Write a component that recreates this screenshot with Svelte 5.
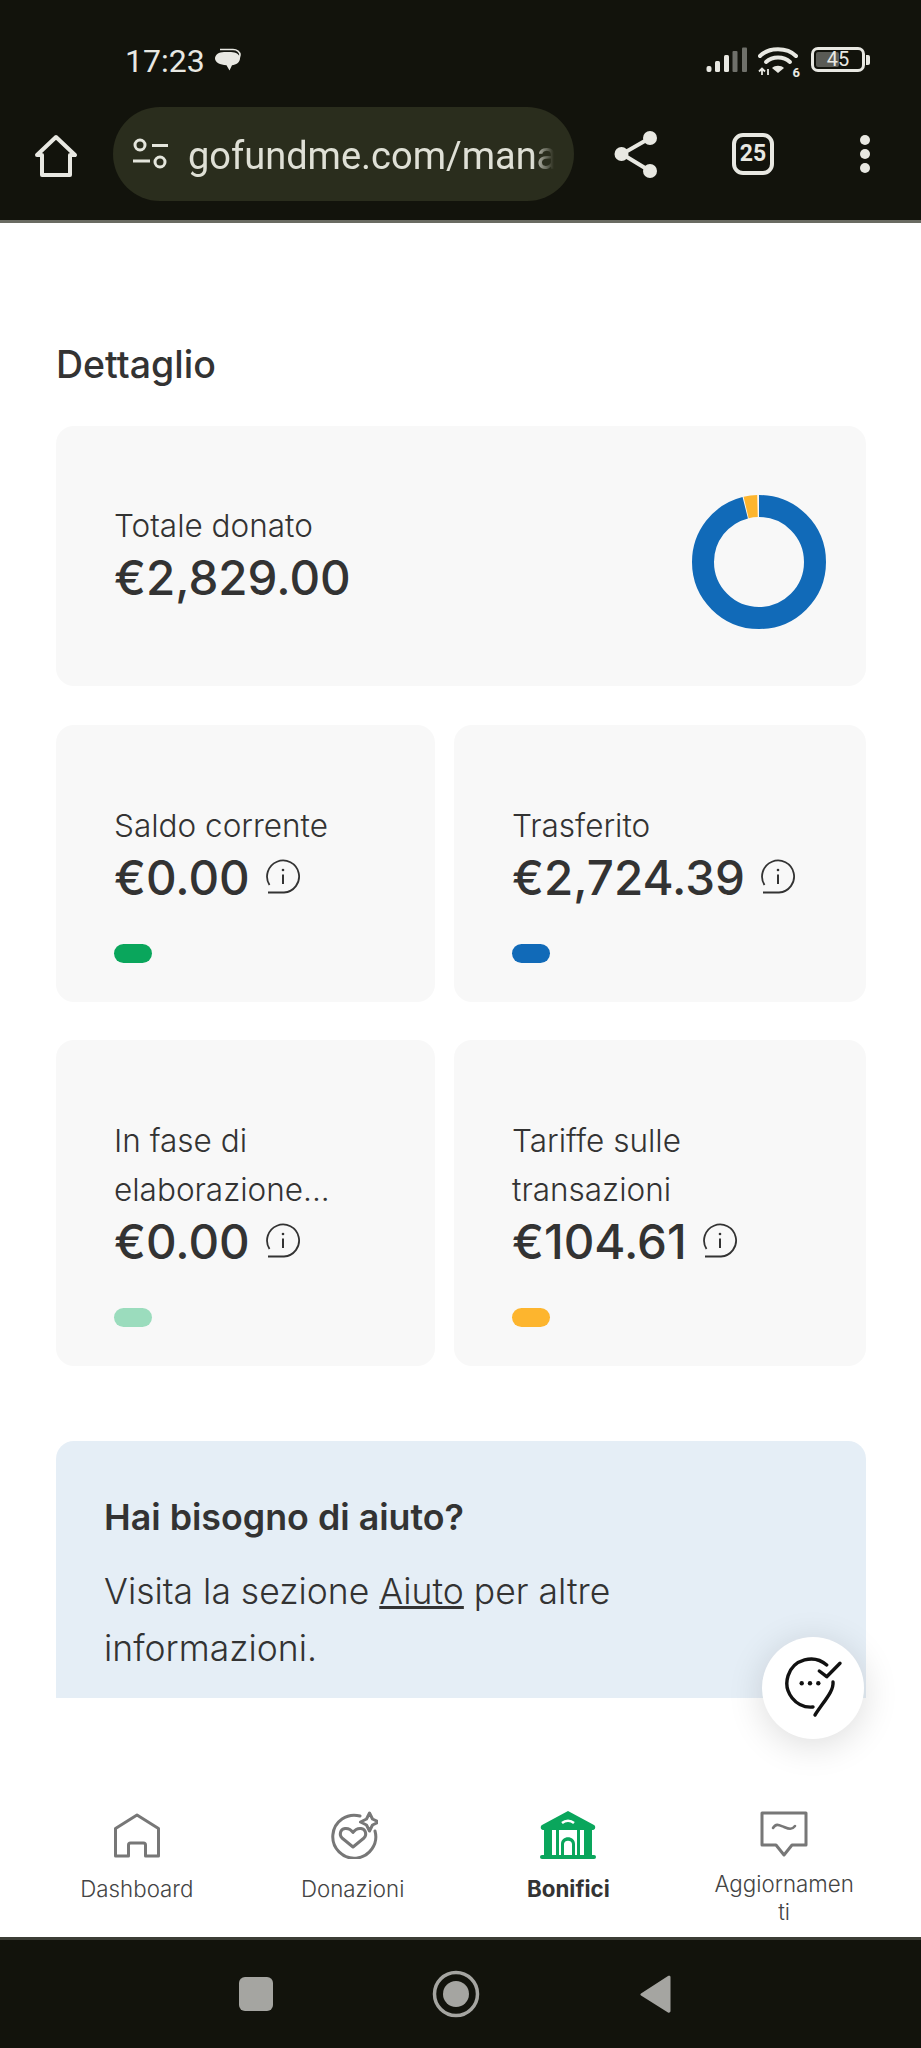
<script>
  const total = 2829;
  const fees = 104.61;

  const radius = 56;
  const circ = 2 * Math.PI * radius;
  const feeShare = fees / total;

  const cards = [
    { label: 'Saldo corrente', amount: '€0.00', color: '#0aa65c' },
    { label: 'Trasferito', amount: '€2,724.39', color: '#116ab8' },
    { label: 'In fase di elaborazione...', amount: '€0.00', color: '#9bdcbd' },
    { label: 'Tariffe sulle transazioni', amount: '€104.61', color: '#fdb52e' }
  ];
</script>

<div class="phone">
  <header class="topbar">
    <div class="status">
      <span class="time">17:23</span>
      <svg class="bubble" width="27" height="26" viewBox="0 0 27 26">
        <path d="M6 1.500h13c4 0 7 2.400 7 5.500 0 2-1 3.600-2.600 4.800" fill="none" stroke="#e8e8e2" stroke-width="1.600" />
        <path d="M10 4h7c5 0 9 2.800 9 6.500S22 17 18 17.200l-2.500 5.300-3-5.300C6 17 1 14.200 1 10.500S5 4 10 4z" fill="#e8e8e2" />
      </svg>
      <div class="status-right">
        <svg width="42" height="26" viewBox="0 0 42 26">
          <rect x="0.500" y="19" width="5" height="6" rx="2" fill="#e8e8e2" />
          <rect x="9" y="14" width="5" height="11" rx="1.500" fill="#e8e8e2" />
          <rect x="18" y="8" width="5" height="17" rx="1.500" fill="#e8e8e2" />
          <rect x="26.500" y="4" width="5" height="21" rx="1" fill="#6f706a" />
          <rect x="36" y="0.500" width="5" height="24.500" rx="1" fill="#6f706a" />
        </svg>
        <div class="wifi">
          <svg width="40" height="30" viewBox="0 0 40 30">
            <path d="M2 10C11 1 29 1 38 10" fill="none" stroke="#e8e8e2" stroke-width="4" stroke-linecap="round" />
            <path d="M8 16c6.500-6 17.500-6 24 0" fill="none" stroke="#e8e8e2" stroke-width="4" stroke-linecap="round" />
            <path d="M14 22c3-3 9-3 12 0L20 27z" fill="#e8e8e2" />
            <path d="M4 29V23M1 25.500 4 22.500 7 25.500M10 23v6" fill="none" stroke="#e8e8e2" stroke-width="1.800" />
          </svg>
          <span class="wifi-gen">6</span>
        </div>
        <div class="battery">
          <div class="battery-body">
            <span class="battery-level"></span>
            <span class="battery-num">45</span>
          </div>
          <span class="battery-nub"></span>
        </div>
      </div>
    </div>

    <div class="toolbar">
      <svg class="tool-home" width="44" height="44" viewBox="0 0 44 44">
        <path d="M3 21 22 3l19 18h-5v20H8V21z" fill="none" stroke="#e8e8e2" stroke-width="4" stroke-linejoin="round" />
      </svg>
      <div class="urlbar">
        <svg width="37" height="34" viewBox="0 0 37 34">
          <circle cx="8" cy="8" r="5" fill="none" stroke="#e4e5dc" stroke-width="3" />
          <path d="M20 8.500h16M1 24h17" stroke="#e4e5dc" stroke-width="3" />
          <circle cx="28" cy="25" r="5" fill="none" stroke="#e4e5dc" stroke-width="3" />
        </svg>
        <span class="url">gofundme.com/manage</span>
      </div>
      <svg class="tool-share" width="44" height="48" viewBox="0 0 44 48">
        <path d="M36 8 8 24l28 17" fill="none" stroke="#e8e8e2" stroke-width="4" />
        <circle cx="36" cy="8" r="7" fill="#e8e8e2" />
        <circle cx="7.500" cy="24" r="7" fill="#e8e8e2" />
        <circle cx="36" cy="41" r="7" fill="#e8e8e2" />
      </svg>
      <div class="tabs">25</div>
      <div class="menu"><span></span><span></span><span></span></div>
    </div>
  </header>

  <main class="content">
    <h2>Dettaglio</h2>

    <section class="card total">
      <div>
        <div class="label">Totale donato</div>
        <div class="amount">€2,829.00</div>
      </div>
      <svg class="donut" width="134" height="134" viewBox="0 0 134 134">
        <circle
          cx="67" cy="67" r={radius} fill="none" stroke="#116ab8" stroke-width="22"
          stroke-dasharray="{(1 - feeShare) * circ - 1.5} {feeShare * circ + 1.5}"
          transform="rotate(-90 67 67)"
        />
        <circle
          cx="67" cy="67" r={radius} fill="none" stroke="#fdb52e" stroke-width="22"
          stroke-dasharray="{feeShare * circ - 1.5} {(1 - feeShare) * circ + 1.5}"
          transform="rotate({-90 - feeShare * 360} 67 67)"
        />
      </svg>
    </section>

    <div class="grid">
      {#each cards as card}
        <section class="card">
          <div class="label">{card.label}</div>
          <div class="amount-row">
            <span class="amount">{card.amount}</span>
            <svg class="info" width="36" height="36" viewBox="0 0 36 36" fill="none" stroke="#333" stroke-width="1.800">
              <path d="M3 33.500h16A16 16 0 1 0 4.500 26" />
              <path d="M18 15.500V25" stroke-width="2" />
              <circle cx="18" cy="11" r="1.300" fill="#333" stroke="none" />
            </svg>
          </div>
          <span class="pill" style="background: {card.color}"></span>
        </section>
      {/each}
    </div>

    <section class="help">
      <h3>Hai bisogno di aiuto?</h3>
      <p>Visita la sezione <a href="#aiuto">Aiuto</a> per altre informazioni.</p>
    </section>
  </main>

  <button class="fab" aria-label="Assistenza">
    <svg width="67" height="67" viewBox="0 0 67 67" fill="none" stroke="#111" stroke-width="3.400" stroke-linecap="round" stroke-linejoin="round">
      <path d="M46.700 10A24 24 0 1 0 33 52" />
      <path d="M53 27C54 36 44 46 35 60" />
      <path d="M39.300 16l7.400 5.700L60 8.300" />
      <circle cx="21.700" cy="28.300" r="2.200" fill="#111" stroke="none" />
      <circle cx="30" cy="28.300" r="2.200" fill="#111" stroke="none" />
      <circle cx="38.300" cy="28.300" r="2.200" fill="#111" stroke="none" />
    </svg>
  </button>

  <nav class="tabsbar">
    <a class="nav-item" href="#dashboard">
      <span class="nav-icon">
        <svg width="46" height="45" viewBox="0 0 46 45" fill="none" stroke="#777" stroke-width="3" stroke-linejoin="round">
          <path d="M23 2 44.500 15.500V43H31.500V32a2 2 0 0 0-2-2h-13a2 2 0 0 0-2 2V43H1.500V15.500z" />
        </svg>
      </span>
      <span class="nav-label">Dashboard</span>
    </a>
    <a class="nav-item" href="#donazioni">
      <span class="nav-icon">
        <svg width="50" height="48" viewBox="0 0 50 48" fill="none" stroke="#777" stroke-width="3" stroke-linejoin="round" stroke-linecap="round">
          <g transform="translate(3 0)">
            <path d="M29 5A21.500 21.500 0 1 0 44 20" />
            <path d="M22 36 11 27c-3-3-2-9 3-9.500 3-.3 6 1 8 4 2-3 5-4.300 8-4 5 .5 6 6.500 3 9.500z" />
            <path d="M38.500 2l3 6 6 3-6 3-3 6-3-6-6-3 6-3z" />
          </g>
        </svg>
      </span>
      <span class="nav-label">Donazioni</span>
    </a>
    <a class="nav-item active" href="#bonifici">
      <span class="nav-icon">
        <svg width="56" height="48" viewBox="0 0 56 48" fill="#0aa65c">
          <path d="M28 0 54 14c2 1 1.500 5-1 5H3c-2.500 0-3-4-1-5z" />
          <path d="M22 12c3.500-3 8.500-3 12 0" fill="none" stroke="#fff" stroke-width="2.500" />
          <rect x="4" y="19" width="8" height="25" />
          <rect x="16" y="19" width="3" height="25" />
          <path d="M21 44V33c0-9 14-9 14 0v11h-3V33c0-4.500-8-4.500-8 0v11z" />
          <rect x="37" y="19" width="3" height="25" />
          <rect x="44" y="19" width="8" height="25" />
          <rect x="0" y="44" width="56" height="4" rx="2" />
        </svg>
      </span>
      <span class="nav-label">Bonifici</span>
    </a>
    <a class="nav-item wrapped" href="#aggiornamenti">
      <span class="nav-icon">
        <svg width="48" height="46" viewBox="0 0 48 46" fill="none" stroke="#777" stroke-width="3" stroke-linejoin="round" stroke-linecap="round">
          <path d="M2 2H46V34H32L24 44 16 34H2z" />
          <path d="M13 17c3-5 6-3 11-1s8 3 11-1" stroke-width="2.600" />
        </svg>
      </span>
      <span class="nav-label">Aggiornamenti</span>
    </a>
  </nav>

  <footer class="sysnav">
    <span class="sys-square"></span>
    <svg width="48" height="48" viewBox="0 0 48 48">
      <circle cx="24" cy="24" r="21.500" fill="none" stroke="#a5a5a1" stroke-width="3.500" />
      <circle cx="24" cy="24" r="13" fill="#a5a5a1" />
    </svg>
    <svg width="32" height="40" viewBox="0 0 32 40">
      <path d="M29 2 2 19.500c-.8.500-.8 1.500 0 2L29 38.500c1 .6 2.500 0 2.500-1.500V3c0-1.500-1.500-1.600-2.500-1z" fill="#a5a5a1" />
    </svg>
  </footer>
</div>

<style>
  :global(body) {
    margin: 0;
    background: #fff;
  }

  .phone {
    position: relative;
    width: 921px;
    height: 2048px;
    display: flex;
    flex-direction: column;
    overflow: hidden;
    font-family: Inter, 'Liberation Sans', sans-serif;
    color: #333;
  }

  /* android status bar + chrome toolbar */
  .topbar {
    background: #12130c;
    height: 220px;
    border-bottom: 3px solid #6a6b62;
    flex: none;
    font-family: Roboto, sans-serif;
    color: #e8e8e2;
  }

  .status {
    height: 107px;
    padding: 47px 51px 0 125px;
    box-sizing: border-box;
    display: flex;
    align-items: flex-start;
  }

  .time {
    font-size: 32px;
    line-height: 28px;
  }

  .bubble {
    margin-left: 9px;
    margin-top: 1px;
  }

  .status-right {
    margin-left: auto;
    display: flex;
    align-items: flex-start;
    gap: 10px;
  }

  .wifi {
    position: relative;
    margin-top: -1px;
    margin-right: 3px;
  }

  .wifi-gen {
    position: absolute;
    right: -2px;
    bottom: 1px;
    font-size: 13px;
    line-height: 13px;
    font-weight: 700;
  }

  .battery {
    display: flex;
    align-items: center;
    gap: 1px;
  }

  .battery-body {
    position: relative;
    width: 54px;
    height: 25px;
    box-sizing: border-box;
    border: 3px solid #e8e8e2;
    border-radius: 7px;
    text-align: center;
    font-size: 20px;
    line-height: 19px;
  }

  .battery-level {
    position: absolute;
    left: 2px;
    top: 2px;
    bottom: 2px;
    width: 23px;
    background: #5a5b55;
    border-radius: 2px;
  }

  .battery-num {
    position: relative;
  }

  .battery-nub {
    width: 4px;
    height: 10px;
    background: #e8e8e2;
    border-radius: 0 2px 2px 0;
  }

  .toolbar {
    display: flex;
    align-items: center;
    height: 94px;
    padding-left: 34px;
  }

  .tool-home {
    margin-top: 4px;
  }

  .urlbar {
    width: 461px;
    height: 94px;
    margin-left: 35px;
    padding-left: 19px;
    box-sizing: border-box;
    display: flex;
    align-items: center;
    gap: 19px;
    flex: none;
    background: #2a2d1d;
    border-radius: 47px;
  }

  .url {
    width: 366px;
    padding-top: 3px;
    overflow: hidden;
    white-space: nowrap;
    font-size: 38px;
    color: #dfe0d6;
    -webkit-mask-image: linear-gradient(to right, #000 94%, transparent 100%);
    mask-image: linear-gradient(to right, #000 94%, transparent 100%);
  }

  .tool-share {
    margin-left: 40px;
    flex: none;
  }

  .tabs {
    width: 42px;
    height: 42px;
    margin-left: 74px;
    box-sizing: border-box;
    border: 4px solid #e8e8e2;
    border-radius: 11px;
    text-align: center;
    font-family: 'Liberation Sans Narrow', Roboto, sans-serif;
    font-size: 23px;
    font-weight: 700;
    line-height: 34px;
    flex: none;
  }

  .menu {
    margin-left: 86px;
    display: flex;
    flex-direction: column;
    gap: 4px;
  }

  .menu span {
    width: 10px;
    height: 10px;
    border-radius: 50%;
    background: #e8e8e2;
  }

  /* page content */
  .content {
    flex: 1;
    min-height: 0;
    overflow: hidden;
    padding: 122px 55px 0 56px;
  }

  h2 {
    margin: 0 0 41px;
    font-size: 37.500px;
    line-height: 40px;
    font-weight: 500;
  }

  .card {
    background: #f8f8f8;
    border-radius: 18px;
    padding: 76px 20px 39px 58px;
  }

  .total {
    display: flex;
    align-items: center;
    justify-content: space-between;
    height: 260px;
    box-sizing: border-box;
    padding: 0 40px 5px 58px;
    margin-bottom: 39px;
  }

  .donut {
    margin-top: 16px;
  }

  .label {
    max-width: 250px;
    font-size: 31.500px;
    line-height: 49px;
    font-weight: 300;
  }

  .amount {
    font-size: 47.500px;
    line-height: 56px;
    font-weight: 500;
  }

  .total .amount {
    white-space: nowrap;
  }

  .amount-row {
    display: flex;
    align-items: center;
    gap: 15px;
    height: 56px;
  }

  .info {
    margin-top: -3px;
  }

  .pill {
    display: block;
    width: 38px;
    height: 19px;
    margin-top: 38px;
    border-radius: 10px;
  }

  .grid {
    display: grid;
    grid-template-columns: 379px 412px;
    gap: 38px 19px;
  }

  .help {
    margin-top: 75px;
    padding: 56px 48px 0;
    height: 300px;
    box-sizing: border-box;
    background: #e5eef6;
    border-radius: 18px 18px 0 0;
  }

  h3 {
    margin: 0 0 26px;
    font-size: 35.800px;
    line-height: 40px;
    font-weight: 600;
  }

  p {
    max-width: 570px;
    margin: 0;
    font-size: 35.500px;
    line-height: 57px;
    font-weight: 300;
  }

  p a {
    color: inherit;
  }

  .fab {
    position: absolute;
    left: 762px;
    top: 1637px;
    width: 102px;
    height: 102px;
    padding: 0;
    border: none;
    border-radius: 50%;
    background: #fff;
    display: flex;
    align-items: center;
    justify-content: center;
    box-shadow: 0 6px 36px rgba(0, 0, 0, 0.14);
  }

  /* bottom tabs */
  .tabsbar {
    height: 239px;
    flex: none;
    box-sizing: border-box;
    padding: 112px 29px 0;
    background: #fff;
    display: grid;
    grid-template-columns: repeat(4, 1fr);
  }

  .nav-item {
    display: flex;
    flex-direction: column;
    align-items: center;
    color: #444;
    text-decoration: none;
    text-align: center;
    font-size: 22.300px;
    line-height: 28px;
    font-weight: 300;
  }

  .nav-icon {
    height: 50px;
    display: flex;
    align-items: center;
    justify-content: center;
  }

  .nav-label {
    margin-top: 15px;
    width: 144px;
    overflow-wrap: anywhere;
  }

  .wrapped .nav-label {
    margin-top: 12px;
  }

  .wrapped .nav-icon {
    height: 48px;
  }

  .active {
    color: #333;
    font-weight: 700;
  }

  /* android nav */
  .sysnav {
    height: 111px;
    flex: none;
    box-sizing: border-box;
    border-top: 3px solid #3c3d35;
    background: #12130c;
    padding: 0 250px 0 239px;
    display: flex;
    align-items: center;
    justify-content: space-between;
  }

  .sys-square {
    width: 34px;
    height: 34px;
    border-radius: 6px;
    background: #a5a5a1;
  }
</style>
